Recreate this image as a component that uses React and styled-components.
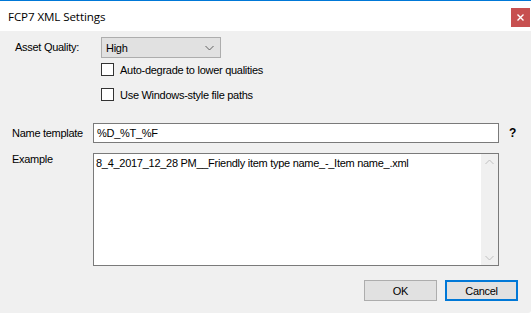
import React from "react";
import styled, { createGlobalStyle } from "styled-components";

const Global = createGlobalStyle`
  html, body { margin: 0; padding: 0; background: #ffffff; }
  body { font-family: "Liberation Sans", Arial, sans-serif; font-size: 11px; color: #000; letter-spacing: -0.28px; }
  * { box-sizing: border-box; }
`;

const Window = styled.div`
  width: 531px;
  height: 313px;
  background: #f0f0f0;
  display: flex;
  flex-direction: column;
  border-bottom-right-radius: 3px;
`;

const TitleBar = styled.div`
  height: 31px;
  background: #ffffff;
  border-top: 1px solid #0078d7;
  display: flex;
  align-items: flex-start;
  justify-content: space-between;
  padding-left: 8px;
`;

const Title = styled.div`
  font-family: "Open Sans", "Noto Sans", sans-serif;
  font-size: 11.6px;
  line-height: 14px;
  margin-top: 9px;
  letter-spacing: -0.1px;
`;

const CloseButton = styled.div`
  width: 19px;
  height: 19px;
  margin-top: 7px;
  margin-right: 1px;
  background: #c75050;
  display: flex;
  align-items: center;
  justify-content: center;
`;

const Body = styled.div`
  flex: 1;
  display: flex;
  flex-direction: column;
  padding: 6px 0 0 0;
`;

const QualityRow = styled.div`
  display: flex;
  align-items: center;
  height: 21px;
`;

const Label = styled.div`
  width: ${(p) => p.$w}px;
  padding-left: ${(p) => p.$pl}px;
  flex-shrink: 0;
  line-height: 13px;
`;

const Select = styled.div`
  width: 120px;
  height: 21px;
  background: #e1e1e1;
  border: 1px solid #adadad;
  display: flex;
  align-items: center;
  justify-content: space-between;
  padding: 0 6px 0 4px;
`;

const CheckRow = styled.div`
  display: flex;
  align-items: center;
  height: 13px;
  margin-left: 101px;
  margin-top: ${(p) => p.$mt}px;
  gap: 6px;
`;

const Box = styled.div`
  width: 13px;
  height: 13px;
  border: 1px solid #333333;
  background: #ffffff;
`;

const FieldRow = styled.div`
  display: flex;
  align-items: ${(p) => (p.$top ? "flex-start" : "center")};
  margin-top: ${(p) => p.$mt}px;
`;

const TextBox = styled.div`
  width: 406px;
  height: 20px;
  background: #ffffff;
  border: 1px solid #7a7a7a;
  display: flex;
  align-items: center;
  padding-left: 3px;
`;

const Help = styled.div`
  margin-left: 10px;
  font-weight: bold;
  font-size: 12px;
`;

const TextArea = styled.div`
  width: 406px;
  height: 113px;
  background: #ffffff;
  border: 1px solid #7a7a7a;
  display: flex;
`;

const AreaText = styled.div`
  flex: 1;
  padding: 3px 0 0 2px;
  line-height: 13px;
`;

const ScrollBar = styled.div`
  width: 17px;
  background: #f0f0f0;
  display: flex;
  flex-direction: column;
  justify-content: space-between;
  align-items: center;
  padding: 5px 0 4px;
`;

const ButtonRow = styled.div`
  display: flex;
  justify-content: flex-end;
  gap: 8px;
  margin-top: 14px;
  padding-right: 13px;
`;

const Button = styled.div`
  width: 73px;
  height: 21px;
  background: #e1e1e1;
  border: ${(p) => (p.$focus ? "2px solid #0078d7" : "1px solid #adadad")};
  display: flex;
  align-items: center;
  justify-content: center;
`;

const Chevron = ({ up, color = "#606060", w = 9 }) => (
  <svg width={w} height="6" viewBox="0 0 9 6">
    <path
      d={up ? "M0.5 5 L4.5 1 L8.5 5" : "M0.5 1 L4.5 5 L8.5 1"}
      fill="none"
      stroke={color}
      strokeWidth="1"
    />
  </svg>
);

export default function App() {
  return (
    <>
      <Global />
      <Window>
        <TitleBar>
          <Title>FCP7 XML Settings</Title>
          <CloseButton>
            <svg width="7" height="7" viewBox="0 0 7 7">
              <path d="M0.5 0.5 L6.5 6.5 M6.5 0.5 L0.5 6.5" stroke="#fff" strokeWidth="1.4" />
            </svg>
          </CloseButton>
        </TitleBar>
        <Body>
          <QualityRow>
            <Label $w={101} $pl={15}>Asset Quality:</Label>
            <Select>
              <span>High</span>
              <Chevron />
            </Select>
          </QualityRow>
          <CheckRow $mt={5}>
            <Box />
            <span>Auto-degrade to lower qualities</span>
          </CheckRow>
          <CheckRow $mt={12}>
            <Box />
            <span>Use Windows-style file paths</span>
          </CheckRow>
          <FieldRow $mt={22}>
            <Label $w={93} $pl={12}>Name template</Label>
            <TextBox>%D_%T_%F</TextBox>
            <Help>?</Help>
          </FieldRow>
          <FieldRow $mt={10} $top>
            <Label $w={93} $pl={12}>Example</Label>
            <TextArea>
              <AreaText>8_4_2017_12_28 PM__Friendly item type name_-_Item name_.xml</AreaText>
              <ScrollBar>
                <Chevron up color="#c0c0c0" w={9} />
                <Chevron color="#c0c0c0" w={9} />
              </ScrollBar>
            </TextArea>
          </FieldRow>
          <ButtonRow>
            <Button>OK</Button>
            <Button $focus>Cancel</Button>
          </ButtonRow>
        </Body>
      </Window>
    </>
  );
}
